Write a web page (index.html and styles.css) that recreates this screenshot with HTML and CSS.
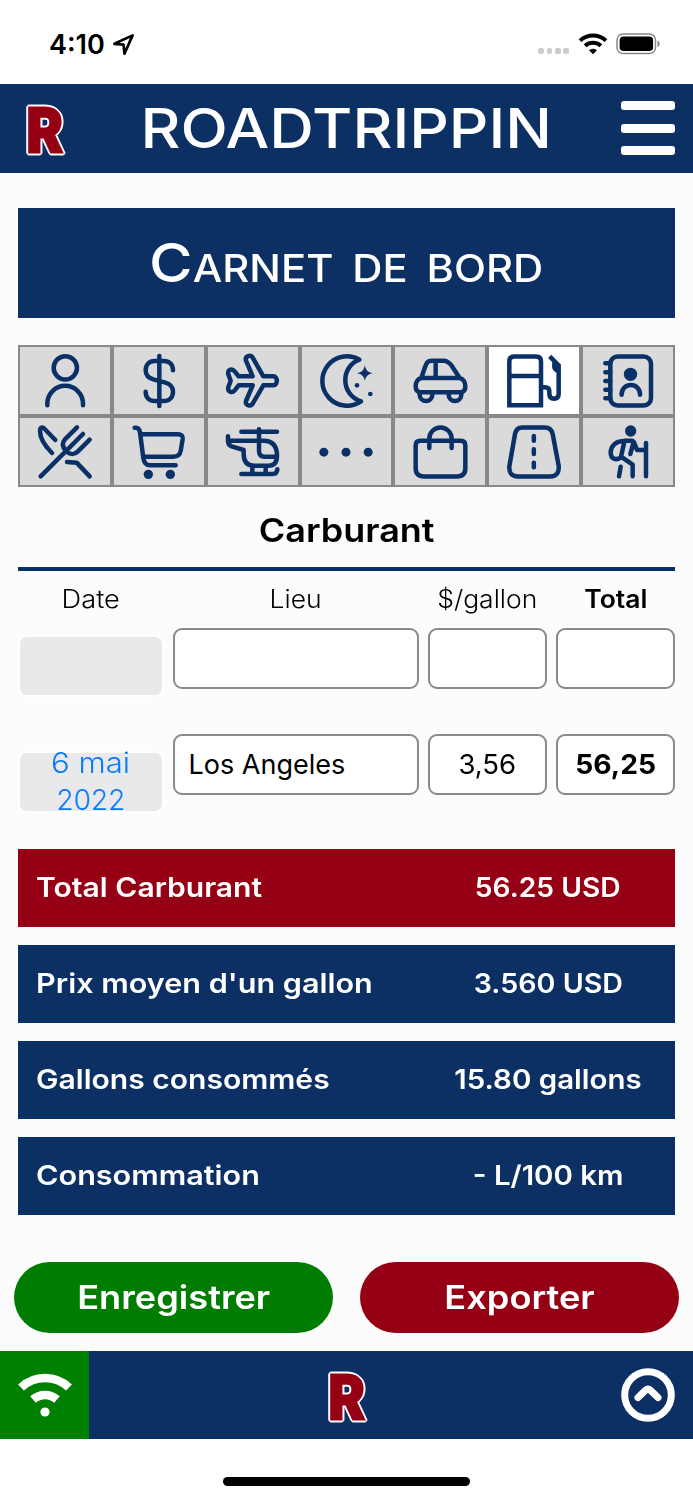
FILE: index.html
```html
<!DOCTYPE html>
<html lang="fr">
<head>
<meta charset="utf-8">
<title>Roadtrippin</title>
<link rel="stylesheet" href="styles.css">
</head>
<body>
<div class="status">
  <span class="clock">4:10</span>
  <svg class="loc" viewBox="0 0 24 24"><path d="M2.500 11.300 21.500 2.500 13 21.500 12 12.200Z"/></svg>
  <div class="status-right">
    <span class="signal"><i></i><i></i><i></i><i></i></span>
    <svg class="wifi" viewBox="0 0 30 22"><path d="M2 7.600A19 19 0 0 1 28 7.600M7.100 12.800A12 12 0 0 1 22.900 12.800"/><path class="tip" d="M11 17.200a6 6 0 0 1 8 0L15 21.300Z"/></svg>
    <svg class="battery" viewBox="0 0 46 22"><rect class="shell" x="1" y="1" width="38.500" height="19.500" rx="6"/><rect x="3.600" y="3.600" width="33.500" height="14.400" rx="3.800"/><path class="cap" d="M41.500 7.500c3 1 3 5.500 0 6.500Z"/></svg>
  </div>
</div>

<header class="topbar">
  <svg class="logo" viewBox="0 0 40 52"><text x="1.500" y="49" textLength="36.500" lengthAdjust="spacingAndGlyphs">R</text></svg>
  <h1 class="brand t">ROADTRIPPIN</h1>
  <div class="burger"><i></i><i></i><i></i></div>
</header>

<main class="content">
  <div class="heading"><h2 class="heading-text t">Carnet de bord</h2></div>

  <nav class="tabs">
    <div class="tab"><svg viewBox="0 0 162 162"><circle cx="82" cy="41.500" r="35"/><path d="M28 154v-5a53.500 53.500 0 0 1 107 0v5"/></svg></div>
    <div class="tab"><svg viewBox="0 0 162 162"><path d="M82 6V156M123 49C123 30 112 21 95 21H68C52 21 41 32 41 49C41 65 50 73 66 77L98 85C114 89 123 97 123 113C123 130 112 141 95 141H69C52 141 41 131 41 113"/></svg></div>
    <div class="tab"><svg viewBox="0 0 162 162"><path d="M80 67L60 20C56 4 75 2 80 11L112 67H142C156 67 156 94 142 94H112L80 149C75 158 56 156 60 141L80 94H38L26 109C18 119 4 113 7 100L14 80L7 61C4 47 18 42 26 52L38 67Z"/></svg></div>
    <div class="tab"><svg viewBox="0 0 162 162"><path d="M121 17A74 74 0 1 0 126 142C64 122 64 38 121 17Z"/><path class="fill" d="M137.500 34Q140 55 161 57.500Q140 60 137.500 81Q135 60 114 57.500Q135 55 137.500 34Z"/><circle class="fill" cx="114" cy="94" r="7"/><circle class="fill" cx="154" cy="120" r="7"/></svg></div>
    <div class="tab"><svg viewBox="0 0 162 162"><path d="M25 72C14 74 8 85 8 97C8 108 13 115 23 115H142C152 115 157 108 157 97C157 83 150 73 138 72ZM25 72L35 42C41 25 44 20 56 20H91C103 20 108 24 115 34L140 72M68 20V72M20 115v7a19 19 0 0 0 38 0v-7M107 115v7a19 19 0 0 0 38 0v-7"/></svg></div>
    <div class="tab active"><svg viewBox="0 0 162 162"><path class="sharp" d="M7 154V22Q7 7.500 22 7.500H87Q102 7.500 102 22V154ZM7 66H102M102 100H114Q127 100 127 112V120Q127 134 141 134Q155 134 155 120V34L128 7"/><path class="fill" d="M136 18L158 34V56H150Q137 52 135 38Z"/></svg></div>
    <div class="tab"><svg viewBox="0 0 162 162"><rect x="28" y="7.500" width="122" height="147" rx="22"/><path d="M13 28H28M13 55H28M13 81H28M13 107H28M13 133H28M62 122v-2a27.500 27 0 0 1 55 0v2"/><circle class="fill" cx="88.500" cy="61" r="20"/></svg></div>
    <div class="tab"><svg viewBox="0 0 162 162"><path d="M8 154L135 27M117 7L80 44C72 53 73 65 84 78C96 90 110 89 119 80L155 44M52 45L20 12C13 4 6 7 6 18C6 42 22 64 42 84M87 111L116 113L155 154"/></svg></div>
    <div class="tab"><svg viewBox="0 0 162 162"><path d="M8 8H12Q22 8 24 22L34 99Q37 121 54 121H131M26 28H138Q154 28 152 42L146 78Q143 95 124 95H34"/><circle class="fill" cx="49" cy="148" r="14"/><circle class="fill" cx="115" cy="148" r="14"/></svg></div>
    <div class="tab"><svg viewBox="0 0 162 162"><path d="M46 20H153M99 13V78Q99 95 116 95H152M6 34V47H112Q153 47 153 92Q153 122 127 122H84Q53 122 53 87V75L17 64Q6 60 6 47M79 124V147M119 124V147M46 147H140Q153 147 154 133"/></svg></div>
    <div class="tab"><svg viewBox="0 0 162 162"><circle class="fill" cx="14.500" cy="81.500" r="13.500"/><circle class="fill" cx="81" cy="81.500" r="13.500"/><circle class="fill" cx="147.500" cy="81.500" r="13.500"/></svg></div>
    <div class="tab"><svg viewBox="0 0 162 162"><path d="M22 47.500H143Q157 47.500 157 61V130Q157 154.500 132 154.500H33Q8 154.500 8 130V61Q8 47.500 22 47.500ZM49 69V41a33.500 33.500 0 0 1 67 0V69"/></svg></div>
    <div class="tab"><svg viewBox="0 0 162 162"><path d="M46 7.500H113Q133 7.500 137 27L155 122Q158 154 130 154.500H33Q5 154 7 124L24 27Q28 7.500 46 7.500ZM80.500 33V47M80.500 73V87M80.500 113V127"/></svg></div>
    <div class="tab"><svg viewBox="0 0 162 162"><path d="M135 54V154M70 47H92Q98 47 101 56L108 75H135M97 54L88 87M70 50L60 95L95 119V154M70 48C42 48 29 65 29 83C29 101 44 108 60 97M59 125L54 154"/><circle class="fill" cx="89" cy="18" r="17"/></svg></div>
  </nav>

  <h3 class="section t s109">Carburant</h3>

  <div class="table">
    <div class="row labels">
      <span><b class="t s109">Date</b></span><span><b class="t s106">Lieu</b></span><span><b class="t s106">$/gallon</b></span><span class="strong"><b class="t s106">Total</b></span>
    </div>
    <div class="row entry">
      <div class="date"></div>
      <div class="field"></div><div class="field"></div><div class="field"></div>
    </div>
    <div class="row entry second">
      <div class="date"><span class="t s111">6 mai</span><span class="t">2022</span></div>
      <div class="field place"><span class="t">Los Angeles</span></div><div class="field"><span class="t s102">3,56</span></div><div class="field strong"><span class="t s104">56,25</span></div>
    </div>
  </div>

  <div class="summary">
    <div class="bar red"><span class="name"><b class="t s111">Total Carburant</b></span><span class="value"><b class="t s104">56.25 USD</b></span></div>
    <div class="bar"><span class="name"><b class="t s113">Prix moyen d'un gallon</b></span><span class="value"><b class="t s106">3.560 USD</b></span></div>
    <div class="bar"><span class="name"><b class="t s111">Gallons consommés</b></span><span class="value"><b class="t s109">15.80 gallons</b></span></div>
    <div class="bar"><span class="name"><b class="t s113">Consommation</b></span><span class="value"><b class="t s109">- L/100 km</b></span></div>
  </div>

  <div class="actions">
    <div class="btn save"><span class="t s111">Enregistrer</span></div>
    <div class="btn export"><span class="t s111">Exporter</span></div>
  </div>
</main>

<footer class="bottombar">
  <div class="online"><svg viewBox="0 0 54 44"><path d="M3 14.500A35 35 0 0 1 51 14.500M15 26.500A18 18 0 0 1 39 26.500"/><circle cx="27" cy="39" r="4.600"/></svg></div>
  <svg class="logo" viewBox="0 0 40 52"><text x="1.500" y="49" textLength="36.500" lengthAdjust="spacingAndGlyphs">R</text></svg>
  <svg class="up" viewBox="0 0 54 54"><circle cx="27" cy="27" r="23.300"/><path d="M17 29.500L24.500 22.300Q27 20 29.500 22.300L37 29.500"/></svg>
</footer>
<div class="home"><i></i></div>
</body>
</html>
```
FILE: styles.css
```css
* { box-sizing: border-box; }
body { margin: 0; width: 693px; height: 1500px; display: flex; flex-direction: column; background: #fff; color: #000; font-family: Inter, "Open Sans", sans-serif; overflow: hidden; }
h1, h2, h3 { margin: 0; font-weight: 500; }
i { display: block; }
b { font-weight: inherit; }

/* Text widened to the proportions of the brand typeface */
.t { display: inline-block; white-space: nowrap; }
.s102 { transform: scaleX(1.02); }
.s104 { transform: scaleX(1.045); }
.s106 { transform: scaleX(1.06); }
.s109 { transform: scaleX(1.09); }
.s111 { transform: scaleX(1.113); }
.s113 { transform: scaleX(1.132); }

.status { height: 84px; display: flex; align-items: center; padding: 5px 31px 0 49px; }
.clock { font-size: 27px; font-weight: 600; line-height: 32px; }
.loc { width: 23px; height: 23px; margin-left: 7px; fill: none; stroke: #000; stroke-width: 2.8; stroke-linejoin: round; }
.status-right { margin-left: auto; display: flex; align-items: center; }
.signal { display: flex; gap: 2.800px; margin: 13px 9px 0 0; }
.signal i { width: 5.600px; height: 5.600px; border-radius: 2px; background: #ccc; }
.wifi { width: 30px; height: 22px; margin-top: -2px; fill: none; stroke: #000; stroke-width: 4; }
.wifi .tip { fill: #000; stroke: none; }
.battery { width: 46px; height: 22px; margin: -1px 0 0 8px; }
.battery .shell { fill: none; stroke: #888; stroke-width: 1.5; }
.battery .cap { fill: #888; }

.topbar { height: 88.500px; background: #0d3064; display: grid; grid-template-columns: 89px 1fr 89px; align-items: center; justify-items: center; }
.logo { width: 40px; height: 52px; margin: 2px 0 0 1px; overflow: visible; filter: drop-shadow(1px 1px 0 #fff) drop-shadow(-1px -1px 0 #fff) drop-shadow(1px -1px 0 #fff) drop-shadow(-1px 1px 0 #fff); }
.logo text { font: 900 62px Roboto, Inter, sans-serif; fill: #960014; stroke: #960014; stroke-width: 3px; }
.brand { font-size: 55px; line-height: 60px; font-weight: 550; color: #fff; transform: scaleX(1.123); }
.burger { width: 54px; display: flex; flex-direction: column; gap: 13.500px; justify-self: end; margin-right: 18px; }
.burger i { height: 9px; border-radius: 3px; background: #fff; }

.content { flex: 1; background: #fcfcfc; padding: 35.500px 18px 0; display: flex; flex-direction: column; }
.heading { height: 110px; padding-top: 4px; background: #0d3064; color: #fff; display: flex; align-items: center; justify-content: center; }
.heading-text { font-size: 38px; line-height: 60px; font-weight: 550; word-spacing: 7px; text-transform: uppercase; transform: scaleX(1.1); }
.heading-text::first-letter { font-size: 54px; }
.tabs { margin-top: 27px; display: grid; grid-template-columns: repeat(7, 1fr); grid-template-rows: 71px 71px; }
.tab { border: 2px solid #888; background: #dadada; display: flex; align-items: center; justify-content: center; }
.tab.active { background: #fff; }
.tab svg { width: 54px; height: 54px; overflow: visible; fill: none; stroke: #0a3068; stroke-width: 13.5; stroke-linecap: round; stroke-linejoin: round; }
.tab svg .fill { fill: #0a3068; stroke: none; }
.tab svg .sharp { stroke-linecap: butt; stroke-linejoin: miter; }
.section { align-self: center; margin-top: 23px; font-size: 33px; line-height: 40px; font-weight: 600; }

.table { margin-top: 17px; border-top: 4px solid #053068; }
.row { display: grid; grid-template-columns: 145.500px 246.500px 119px 119px; column-gap: 9px; }
.labels { height: 56.500px; padding-top: 12px; font-size: 25px; line-height: 32px; font-weight: 300; text-align: center; }
.strong { font-weight: 600; }
.entry { height: 106px; align-items: start; }
.field { height: 61.500px; background: #fff; border: 2px solid #8a8a8e; border-radius: 9px; display: flex; align-items: center; justify-content: center; font-size: 27px; }
.field.strong { font-weight: 700; }
.place { justify-content: flex-start; padding-left: 14px; }
.date { margin: 7px 0 0; height: 62px; border: 2px solid #fff; border-radius: 9px; background: #e9e9eb; color: #087cf8; font-size: 28px; line-height: 37px; font-weight: 300; display: flex; flex-direction: column; align-items: center; justify-content: center; }
.second { height: 115.500px; }
.second .date { margin-top: 17px; }

.summary { display: flex; flex-direction: column; gap: 18px; }
.bar { height: 78px; background: #0d3064; color: #fff; display: grid; grid-template-columns: 403px 218px; padding: 0 18px; align-items: center; font-size: 27px; font-weight: 600; line-height: 34px; }
.bar.red { background: #960014; }
.name .t { transform-origin: left; }
.value { text-align: center; }

.actions { margin: 47px -4px 0; display: flex; justify-content: space-between; }
.btn { width: 319px; height: 71px; border-radius: 36px; color: #fff; font-size: 32.500px; font-weight: 600; display: flex; align-items: center; justify-content: center; }
.save { background: #007d00; }
.export { background: #960014; }

.bottombar { height: 88.500px; background: #0d3064; display: grid; grid-template-columns: 89px 1fr 89px; align-items: center; justify-items: center; }
.online { width: 89px; height: 88.500px; background: #008000; display: flex; align-items: center; justify-content: center; }
.online svg { width: 54px; height: 44px; fill: none; stroke: #fff; stroke-width: 8.500; }
.online circle { fill: #fff; stroke: none; }
.up { width: 54px; height: 54px; justify-self: end; margin-right: 18px; fill: none; stroke: #fff; stroke-width: 7; stroke-linecap: round; stroke-linejoin: round; }
.home { height: 61px; display: flex; justify-content: center; padding-top: 38px; }
.home i { width: 247px; height: 9px; border-radius: 5px; background: #000; }
```
